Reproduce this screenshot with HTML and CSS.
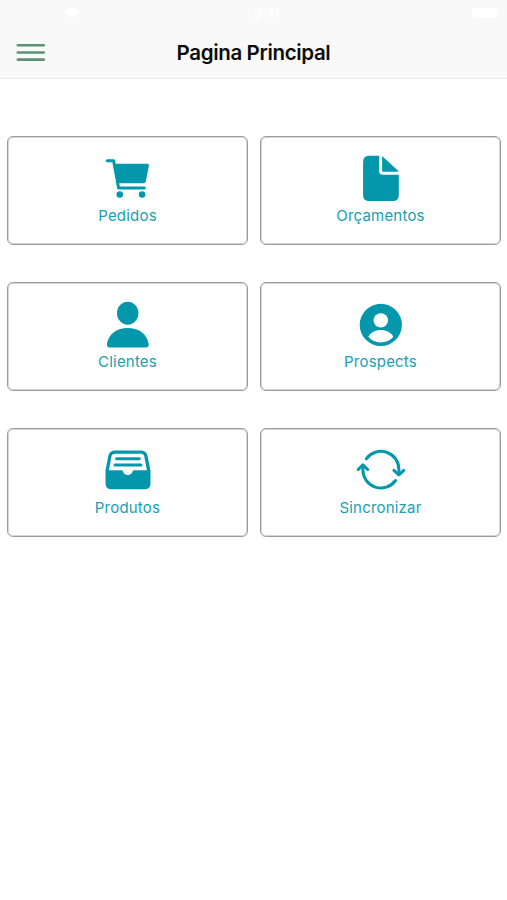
FILE: index.html
```html
<!DOCTYPE html>
<html lang="pt-BR">
<head>
    <meta charset="UTF-8">
    <meta name="viewport" content="width=device-width, initial-scale=1.0">
    <title>Pagina Principal</title>
    <link rel="stylesheet" href="styles.css">
</head>
<body>
    <header>
        <div class="status-bar">
            <svg class="wifi" viewBox="0 0 14 10"><path d="M0 3Q7-3 14 3L7 10z"/></svg>
            <span class="time">9:41</span>
            <span class="battery"></span>
        </div>
        <nav class="toolbar">
            <button class="menu-button" aria-label="Menu">
                <svg viewBox="0 0 29 18"><path d="M1.8 2.3H27.8M1.8 9.5H27.8M1.8 16.6H27.8"/></svg>
            </button>
            <h1>Pagina Principal</h1>
        </nav>
    </header>
    <main class="menu-grid">
        <a class="card" href="#">
            <svg class="icon" viewBox="0.7 0.5 52 52">
                <path class="line thin" d="M6 8.3H12.3L17.3 35.6H43"/>
                <path d="M12.5 11.3H46q2 0 1.6 2L44.6 28.5q-.4 2.2-2.5 2.2H16z"/>
                <circle cx="18.5" cy="42" r="3.3"/>
                <circle cx="40.8" cy="42" r="3.3"/>
            </svg>
            <span>Pedidos</span>
        </a>
        <a class="card" href="#">
            <svg class="icon" viewBox="0.7 0.5 52 52">
                <path d="M14.8 3.3H24.7V18.3q0 4 4 4H44.5V42.5q0 6-6 6H14.8q-6 0-6-6V9.3q0-6 6-6z"/>
                <path d="M27.8 4.5q0-1 .8-.3L43.8 18.3q.8.9-.4.9H28.8q-1 0-1-1z"/>
            </svg>
            <span>Orçamentos</span>
        </a>
        <a class="card" href="#">
            <svg class="icon" viewBox="0.7 0.5 52 52">
                <ellipse cx="26.4" cy="14.7" rx="10.7" ry="11.5"/>
                <path d="M26.4 29.4C37 29.4 45.5 35 47.4 45.2Q47.8 49 44.5 49H8.5Q5.2 49 5.6 45.2C7.5 35 16 29.4 26.4 29.4z"/>
            </svg>
            <span>Clientes</span>
        </a>
        <a class="card" href="#">
            <svg class="icon" viewBox="0.7 0.5 52 52">
                <circle cx="26.5" cy="26.4" r="21.1"/>
                <circle class="cutout" cx="26.5" cy="21.9" r="7.2"/>
                <path class="cutout" d="M14 38.2C16.5 34 21 31.6 26.5 31.6S36.5 34 39 38.2C36 41.8 31.5 43.9 26.5 43.9S17 41.8 14 38.2z"/>
            </svg>
            <span>Prospects</span>
        </a>
        <a class="card" href="#">
            <svg class="icon" viewBox="0.7 0.5 52 52">
                <path d="M14 6.1H39.3q6 0 7 5.5L49.2 25.7V38.7q0 6-6 6H10.2q-6 0-6-6V25.7L7 11.6q1-5.5 7-5.5z"/>
                <path class="cutout" d="M13.5 9.3H39.7q2.8 0 3.3 2.8L45.6 25.7H32.7q-1 0-1.3 1a5.1 5.1 0 0 1-9.8 0q-.3-1-1.3-1H7.6L10.2 12.1q.5-2.8 3.3-2.8z"/>
                <path class="line thin" d="M15.3 14.3H38M13.7 20.4H39.6"/>
            </svg>
            <span>Produtos</span>
        </a>
        <a class="card" href="#">
            <svg class="icon" viewBox="0.7 0.5 52 52">
                <path class="line thin" d="M12 14.3A18 18 0 0 1 44.6 25.1V29.5M41.2 36A18 18 0 0 1 8.6 25.1V20.7"/>
                <path class="line thin" d="M39.6 25.8L44.6 30.3L49.4 25.8M3.9 25L8.6 20.4L13.4 25"/>
            </svg>
            <span>Sincronizar</span>
        </a>
    </main>
</body>
</html>
```

FILE: styles.css
```css
/* Basic reset */
* {
    margin: 0;
    padding: 0;
    box-sizing: border-box;
}

body {
    font-family: 'Inter', sans-serif;
    background-color: #fff;
    min-height: 100vh;
}

/* Header styling */
header {
    height: 79px;
    background-color: #f9f9f9;
    border-bottom: 1px solid #e9e9e9;
}

.status-bar {
    display: grid;
    grid-template-columns: 1fr auto 1fr;
    align-items: center;
    height: 26px;
    padding: 0 10px 0 65px;
    color: #fff;
}

.wifi {
    width: 14px;
    height: 10px;
    fill: #fff;
}

.time {
    margin-left: -27px;
    font-size: 13px;
    font-weight: 500;
}

.battery {
    justify-self: end;
    width: 25px;
    height: 10px;
    background-color: #fff;
    border-radius: 3px;
}

.toolbar {
    display: grid;
    grid-template-columns: 60px 1fr 60px;
    align-items: center;
    height: 52px;
}

.menu-button {
    width: 29px;
    height: 18px;
    margin-left: 16px;
    background: none;
    border: none;
}

.menu-button svg {
    display: block;
    width: 29px;
    height: 18px;
    overflow: visible;
    stroke: #5b9275;
    stroke-width: 2.6;
    stroke-linecap: round;
}

.toolbar h1 {
    font-size: 20.5px;
    font-weight: 600;
    letter-spacing: -0.35px;
    text-align: center;
    color: #0b0b0b;
}

/* Main menu */
.menu-grid {
    display: grid;
    grid-template-columns: 1fr 1fr;
    grid-auto-rows: 108.5px;
    gap: 37.7px 12px;
    padding: 57px 6px 0 7px;
}

.card {
    display: flex;
    flex-direction: column;
    align-items: center;
    padding-top: 15.5px;
    border: 1px solid #9c9c9c;
    border-radius: 6px;
    box-shadow: inset 0 0 0 1px #d6d6d6;
    font-size: 15px;
    line-height: 20px;
    letter-spacing: 0.2px;
    text-decoration: none;
    color: #18a0b2;
}

.icon {
    width: 52px;
    height: 52px;
    margin-bottom: 1px;
    fill: #0397ab;
}

.icon .line {
    fill: none;
    stroke: #0397ab;
    stroke-width: 3.4;
    stroke-linecap: round;
    stroke-linejoin: round;
}

.icon .thin {
    stroke-width: 3;
}

.icon .cutout {
    fill: #fff;
}
```
